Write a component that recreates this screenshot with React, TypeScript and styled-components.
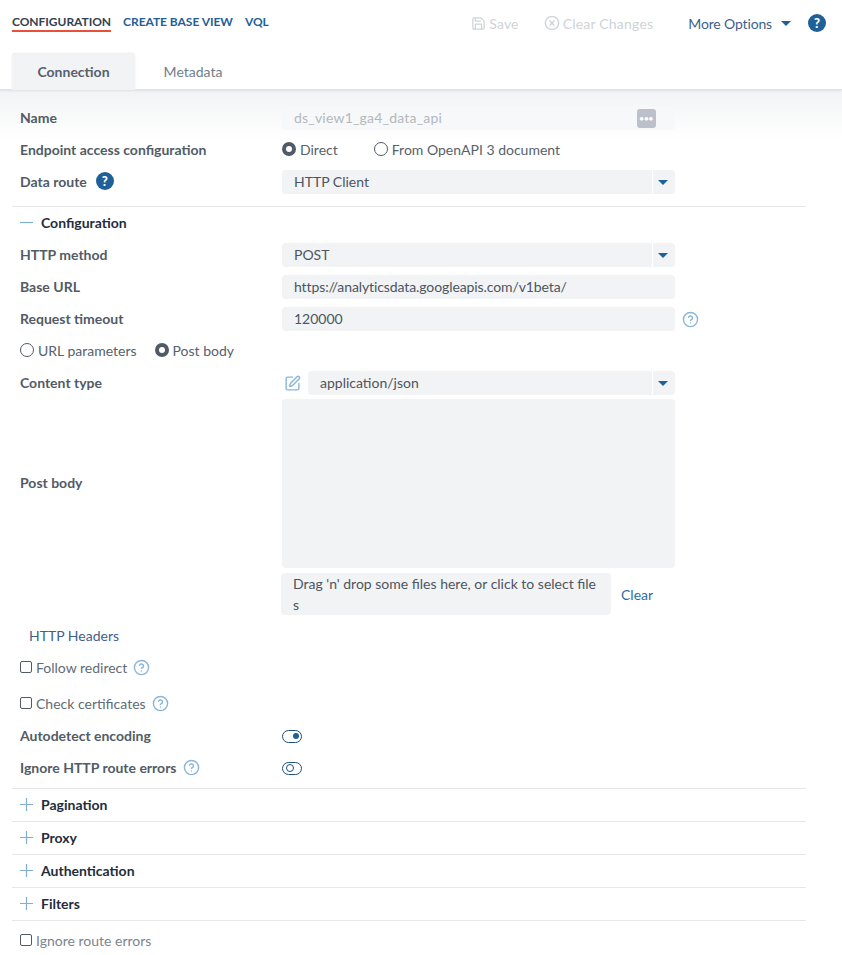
import React from 'react';
import styled, { createGlobalStyle } from 'styled-components';
import { Save, CircleX, SquarePen, CircleHelp } from 'lucide-react';

const GlobalStyle = createGlobalStyle`
  html, body {
    margin: 0;
    padding: 0;
    background: #fff;
    font-family: Lato, "Open Sans", sans-serif;
    font-size: 14px;
    color: #4c5560;
  }
  * { box-sizing: border-box; }
`;

const Page = styled.div`
  width: 842px;
  height: 955px;
  overflow: hidden;
`;

const TopBar = styled.div`
  height: 54px;
  display: flex;
  justify-content: space-between;
  padding: 14px 16px 0 12px;
`;
const NavLinks = styled.nav`
  display: flex;
  gap: 12px;
  align-items: flex-start;
`;
const NavLink = styled.a<{ $active?: boolean }>`
  height: 18px;
  line-height: 16px;
  font-size: 12px;
  font-weight: 700;
  letter-spacing: -0.04px;
  color: ${(p) => (p.$active ? '#33414e' : '#1f6098')};
  border-bottom: ${(p) => (p.$active ? '2px solid #e8503a' : 'none')};
`;
const Actions = styled.div`
  display: flex;
  align-items: center;
  height: 18px;
`;
const GhostAction = styled.span<{ $gap: number }>`
  display: flex;
  align-items: center;
  gap: 3px;
  color: #cfd3d8;
  letter-spacing: 0.2px;
  margin-right: ${(p) => p.$gap}px;
`;
const MoreOptions = styled.span`
  display: flex;
  align-items: center;
  color: #3f5f8c;
  letter-spacing: -0.15px;
  margin-right: 17px;
`;
const Caret = styled.span<{ $left?: number }>`
  width: 0;
  height: 0;
  margin-left: ${(p) => p.$left ?? 0}px;
  border-left: 5px solid transparent;
  border-right: 5px solid transparent;
  border-top: 5px solid #1f6098;
`;
const HelpBadge = styled.span<{ $left?: number }>`
  width: 18px;
  height: 18px;
  border-radius: 50%;
  background: #1f6098;
  color: #fff;
  font-size: 13px;
  font-weight: 900;
  line-height: 18px;
  text-align: center;
  margin-left: ${(p) => p.$left ?? 0}px;
`;

const Tabs = styled.div`
  height: 36px;
  display: flex;
  padding-left: 12px;
  border-bottom: 1px solid #dfe1e4;
  box-shadow: 0 1px 2px rgba(0, 0, 0, 0.08);
  position: relative;
`;
const Tab = styled.div<{ $active?: boolean; $width: number }>`
  width: ${(p) => p.$width}px;
  height: 36px;
  line-height: 36px;
  text-align: center;
  font-weight: ${(p) => (p.$active ? 700 : 400)};
  color: ${(p) => (p.$active ? '#56616c' : '#6f7d8a')};
  background: ${(p) => (p.$active ? '#f2f3f5' : 'transparent')};
  border-radius: 4px 4px 0 0;
  box-shadow: ${(p) => (p.$active ? '0 -1px 2px rgba(0, 0, 0, 0.08)' : 'none')};
`;

const Body = styled.div`
  padding: 12px 36px 0 12px;
  background: linear-gradient(#f2f3f5 0, #fff 50px);
`;
const Row = styled.div<{ $height?: number; $top?: number; $bottom?: number }>`
  display: grid;
  grid-template-columns: 262px 393px auto;
  align-items: center;
  padding-left: 8px;
  height: ${(p) => p.$height ?? 32}px;
  margin-top: ${(p) => p.$top ?? 0}px;
  margin-bottom: ${(p) => p.$bottom ?? 0}px;
`;
const Label = styled.label`
  display: flex;
  align-items: center;
  padding-bottom: 2px;
  font-weight: 700;
  color: #525b66;
`;
const Field = styled.div<{ $disabled?: boolean; $spacing?: number }>`
  height: 24px;
  line-height: 24px;
  padding-left: 12px;
  border-radius: 4px;
  background: ${(p) => (p.$disabled ? '#f7f8f9' : '#f2f3f5')};
  color: ${(p) => (p.$disabled ? '#b3b8be' : '#4c5560')};
  letter-spacing: ${(p) => p.$spacing ?? 0}px;
  position: relative;
  flex: 1;
`;
const SelectField = styled(Field)`
  &::after {
    content: '';
    position: absolute;
    right: 22px;
    top: 0;
    height: 24px;
    border-left: 1px solid #fff;
  }
`;
const SelectCaret = styled(Caret)`
  position: absolute;
  right: 7px;
  top: 10px;
`;
const DotsButton = styled.span`
  position: absolute;
  right: 19px;
  top: 3px;
  width: 19px;
  height: 19px;
  border-radius: 3px;
  background: #bcc0cb;
  color: #fff;
  font-size: 7px;
  font-weight: 900;
  letter-spacing: 0.5px;
  line-height: 18px;
  text-align: center;
`;
const RadioGroup = styled.div<{ $gap: number; $nudge?: boolean }>`
  display: flex;
  align-items: center;
  gap: ${(p) => p.$gap}px;
  padding-bottom: 2px;
`;
const RadioOption = styled.span`
  display: flex;
  align-items: center;
  gap: 4px;
  color: #56616c;
`;
const RadioDot = styled.span<{ $checked?: boolean }>`
  width: 14px;
  height: 14px;
  border-radius: 50%;
  background: #fff;
  border: ${(p) => (p.$checked ? '4px solid #515a66' : '1.5px solid #515a66')};
`;
const ContentType = styled.div`
  display: flex;
  align-items: center;
  gap: 7px;
  padding-left: 2px;
  color: #8ab6d9;
`;
const PostBody = styled.div`
  height: 169px;
  border-radius: 4px;
  background: #f2f3f5;
`;
const DropRow = styled.div`
  display: flex;
  align-items: center;
  gap: 10px;
  margin: 5px 0 0 269px;
  height: 42px;
`;
const DropZone = styled.div`
  width: 330px;
  height: 42px;
  padding: 0 12px;
  border-radius: 4px;
  background: #f2f3f5;
  line-height: 21px;
  word-break: break-all;
  color: #4c5560;
`;
const LinkText = styled.a`
  color: #2f6ba3;
`;
const HeadersLink = styled.a`
  display: block;
  height: 32px;
  margin-top: 5px;
  line-height: 32px;
  padding-left: 17px;
  color: #3f5f8c;
`;
const CheckLabel = styled.span<{ $muted?: boolean }>`
  display: flex;
  align-items: center;
  gap: 4px;
  padding-bottom: 2px;
  color: ${(p) => (p.$muted ? '#7a8590' : '#5f6b76')};
`;
const CheckBox = styled.span`
  width: 12px;
  height: 12px;
  border: 1.5px solid #515a66;
  border-radius: 2px;
  background: #fff;
`;
const Hint = styled(CircleHelp)<{ $left?: number }>`
  color: #8ab6d9;
  margin-left: ${(p) => p.$left ?? 0}px;
`;
const Toggle = styled.span<{ $on?: boolean }>`
  display: flex;
  align-items: center;
  justify-content: ${(p) => (p.$on ? 'flex-end' : 'flex-start')};
  width: 20px;
  height: 13px;
  padding: 0 2.5px;
  border-radius: 7px;
  border: 1.5px solid #1f4f80;
  &::before {
    content: '';
    width: 6px;
    height: 6px;
    border-radius: 50%;
    background: ${(p) => (p.$on ? '#1f6098' : '#fff')};
    border: ${(p) => (p.$on ? 'none' : '1px solid #1f4f80')};
  }
`;
const Section = styled.div<{ $top?: boolean }>`
  display: flex;
  align-items: center;
  gap: 8px;
  height: ${(p) => (p.$top ? 34 : 33)}px;
  padding-left: 8px;
  padding-bottom: 1px;
  border-bottom: 1px solid #e6e7e9;
  border-top: ${(p) => (p.$top ? '1px solid #e6e7e9' : 'none')};
  font-weight: 700;
  color: #1f2d3d;
`;
const OpenSection = styled(Section)`
  border-bottom: none;
  height: 33px;
  margin-top: 8px;
`;
const SectionIcon = styled.svg`
  width: 13px;
  height: 13px;
  stroke: #7fb0d3;
  stroke-width: 1.2;
  fill: none;
`;

const Select = ({ value }: { value: string }) => (
  <SelectField>
    {value}
    <SelectCaret />
  </SelectField>
);

const PlusIcon = () => (
  <SectionIcon viewBox="0 0 13 13">
    <path d="M0 6.5h13M6.5 0v13" />
  </SectionIcon>
);

const MinusIcon = () => (
  <SectionIcon viewBox="0 0 13 13">
    <path d="M0 6.5h13" />
  </SectionIcon>
);

const App = () => (
  <Page>
    <GlobalStyle />
    <TopBar>
      <NavLinks>
        <NavLink $active>CONFIGURATION</NavLink>
        <NavLink>CREATE BASE VIEW</NavLink>
        <NavLink>VQL</NavLink>
      </NavLinks>
      <Actions>
        <GhostAction $gap={25}>
          <Save size={15} />
          Save
        </GhostAction>
        <GhostAction $gap={35}>
          <CircleX size={16} />
          Clear Changes
        </GhostAction>
        <MoreOptions>
          More Options
          <Caret $left={9} />
        </MoreOptions>
        <HelpBadge>?</HelpBadge>
      </Actions>
    </TopBar>
    <Tabs>
      <Tab $active $width={123}>Connection</Tab>
      <Tab $width={116}>Metadata</Tab>
    </Tabs>
    <Body>
      <Row>
        <Label>Name</Label>
        <Field $disabled $spacing={0.2}>
          ds_view1_ga4_data_api
          <DotsButton>●●●</DotsButton>
        </Field>
      </Row>
      <Row>
        <Label>Endpoint access configuration</Label>
        <RadioGroup $gap={36}>
          <RadioOption>
            <RadioDot $checked />
            Direct
          </RadioOption>
          <RadioOption>
            <RadioDot />
            From OpenAPI 3 document
          </RadioOption>
        </RadioGroup>
      </Row>
      <Row>
        <Label>
          Data route
          <HelpBadge $left={9}>?</HelpBadge>
        </Label>
        <Select value="HTTP Client" />
      </Row>
      <OpenSection $top>
        <MinusIcon />
        Configuration
      </OpenSection>
      <Row>
        <Label>HTTP method</Label>
        <Select value="POST" />
      </Row>
      <Row>
        <Label>Base URL</Label>
        <Field $spacing={-0.1}>https://analyticsdata.googleapis.com/v1beta/</Field>
      </Row>
      <Row>
        <Label>Request timeout</Label>
        <Field>120000</Field>
        <Hint size={17} $left={7} />
      </Row>
      <Row>
        <RadioGroup $gap={18}>
          <RadioOption>
            <RadioDot />
            URL parameters
          </RadioOption>
          <RadioOption>
            <RadioDot $checked />
            Post body
          </RadioOption>
        </RadioGroup>
      </Row>
      <Row>
        <Label>Content type</Label>
        <ContentType>
          <SquarePen size={17} />
          <Select value="application/json" />
        </ContentType>
      </Row>
      <Row $height={169}>
        <Label>Post body</Label>
        <PostBody />
      </Row>
      <DropRow>
        <DropZone>Drag 'n' drop some files here, or click to select files</DropZone>
        <LinkText>Clear</LinkText>
      </DropRow>
      <HeadersLink>HTTP Headers</HeadersLink>
      <Row>
        <CheckLabel>
          <CheckBox />
          Follow redirect
          <Hint size={17} $left={2} />
        </CheckLabel>
      </Row>
      <Row $top={4}>
        <CheckLabel>
          <CheckBox />
          Check certificates
          <Hint size={17} $left={2} />
        </CheckLabel>
      </Row>
      <Row>
        <Label>Autodetect encoding</Label>
        <Toggle $on />
      </Row>
      <Row $bottom={4}>
        <Label>
          Ignore HTTP route errors
          <Hint size={17} $left={6} />
        </Label>
        <Toggle />
      </Row>
      <Section $top>
        <PlusIcon />
        Pagination
      </Section>
      <Section>
        <PlusIcon />
        Proxy
      </Section>
      <Section>
        <PlusIcon />
        Authentication
      </Section>
      <Section>
        <PlusIcon />
        Filters
      </Section>
      <Row $top={4}>
        <CheckLabel $muted>
          <CheckBox />
          Ignore route errors
        </CheckLabel>
      </Row>
    </Body>
  </Page>
);

export default App;
